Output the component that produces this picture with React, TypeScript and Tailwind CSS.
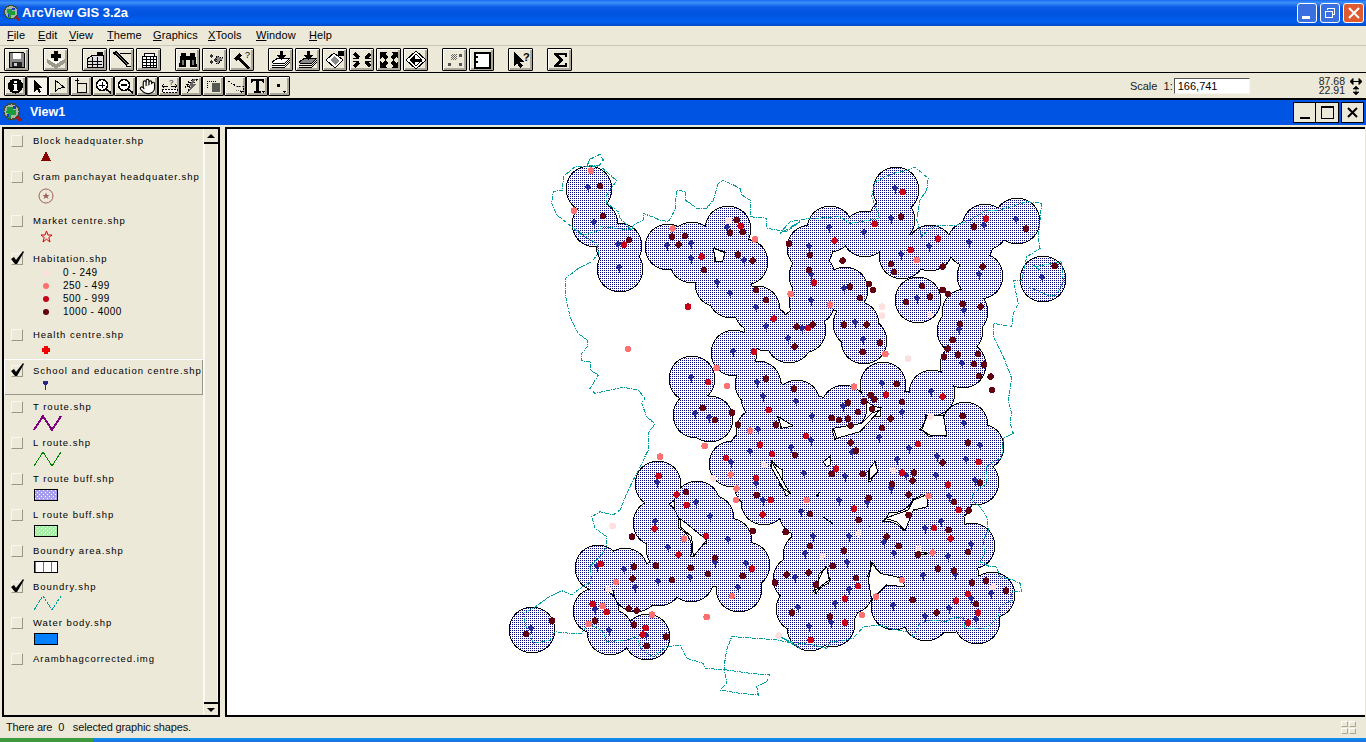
import { Hand } from "lucide-react";
import type { ReactNode } from "react";

type Pt = [number, number];

// crop coords are 3x zoom of the picture, with a crop origin
const crop = (ox: number, oy: number, pts: Pt[]): Pt[] => pts.map(([x, y]) => [ox + x / 3, oy + y / 3]);
const line = (pts: Pt[]) => pts.map(([x, y]) => `${x.toFixed(1)},${y.toFixed(1)}`).join(" ");
const dedupe = (pts: Pt[]) => pts.filter((p, i) => !pts.slice(0, i).some((q) => Math.abs(p[0] - q[0]) < 4 && Math.abs(p[1] - q[1]) < 4));

const PINS: Pt[] = [
  [588, 188], [594, 223], [618, 245], [619, 268], [667, 246], [691, 244], [691, 259], [727, 228], [744, 261], [717, 283],
  [730, 294], [756, 308], [766, 327], [788, 339], [733, 352], [691, 378], [757, 383], [763, 397], [895, 189], [891, 219],
  [864, 233], [829, 228], [809, 247], [811, 275], [844, 289], [811, 301], [855, 323], [802, 329], [863, 340], [901, 255],
  [929, 247], [969, 243], [984, 226], [1016, 220], [979, 275], [917, 299], [1042, 278], [964, 311], [959, 330], [962, 364],
  [882, 384], [931, 392], [695, 414], [709, 418], [758, 430], [796, 402], [750, 452], [791, 448], [731, 463], [756, 484],
  [763, 501], [657, 483], [696, 503], [710, 517], [655, 522], [728, 540], [668, 548], [715, 563], [746, 564], [597, 567],
  [624, 570], [635, 588], [658, 582], [690, 578], [738, 588], [795, 578], [798, 608], [595, 610], [531, 629], [609, 631],
  [646, 636], [843, 407], [902, 413], [812, 417], [811, 441], [879, 438], [909, 449], [852, 453], [897, 460], [937, 457],
  [964, 424], [980, 446], [966, 460], [804, 474], [845, 477], [906, 476], [936, 476], [975, 481], [891, 489], [839, 501],
  [867, 503], [801, 512], [949, 497], [941, 522], [925, 529], [813, 537], [849, 537], [884, 543], [971, 545], [805, 554],
  [894, 554], [948, 557], [847, 563], [955, 575], [923, 576], [991, 594], [971, 599], [849, 590], [835, 604], [893, 606],
  [949, 609], [925, 617], [976, 620], [831, 623], [809, 627],
];

const DARK = dedupe([
  ...crop(500, 140, [[300, 138], [309, 228], [387, 300], [516, 290], [555, 288], [536, 314], [612, 390], [710, 240], [690, 278], [728, 276], [714, 344], [758, 362], [768, 450], [798, 480], [867, 311], [890, 560], [884, 620], [798, 716], [882, 746]]),
  ...crop(780, 140, [[90, 345], [87, 390], [188, 362], [363, 230], [333, 372], [342, 396], [488, 380], [210, 440], [267, 432], [279, 450], [240, 474], [426, 438], [450, 470], [378, 486], [488, 450], [504, 462], [548, 492], [602, 500], [608, 380], [582, 260], [738, 266], [824, 378], [540, 552], [518, 600], [503, 626], [492, 650], [534, 644], [594, 642], [582, 672], [612, 674], [597, 708], [632, 710], [636, 750], [192, 554], [260, 554], [300, 608], [248, 636], [50, 560], [98, 554], [44, 620], [350, 732], [272, 765], [283, 778]]),
  ...crop(500, 400, [[608, 24], [645, 60], [696, 38], [714, 74], [828, 74], [885, 165], [558, 276], [770, 285], [758, 393], [857, 396], [396, 410], [468, 497], [402, 500], [398, 536], [516, 540], [572, 504], [624, 522], [645, 474], [728, 528], [860, 524], [825, 548], [876, 638], [386, 626], [410, 632], [285, 662], [402, 674], [498, 710], [440, 738], [156, 662], [78, 702]]),
  ...crop(780, 400, [[204, 8], [252, 4], [282, 2], [366, 6], [276, 27], [234, 36], [155, 54], [177, 60], [204, 56], [332, 56], [212, 77], [306, 84], [548, 48], [212, 128], [228, 152], [44, 164], [564, 128], [488, 188], [155, 222], [248, 222], [402, 218], [398, 242], [336, 252], [600, 248], [266, 294], [386, 284], [522, 306], [566, 332], [90, 342], [386, 345], [236, 360], [506, 390], [18, 396], [320, 410], [90, 438], [356, 438], [192, 452], [564, 456], [414, 464], [158, 498], [474, 506], [522, 512], [20, 524], [86, 518], [228, 534], [108, 554], [576, 548], [618, 542], [678, 572], [398, 600], [588, 612], [36, 638], [470, 638], [150, 650]]),
]);

const RED = dedupe([
  ...crop(500, 140, [[372, 314], [722, 258], [605, 350], [821, 536], [564, 500], [762, 635], [624, 726]]),
  ...crop(780, 140, [[368, 156], [284, 252], [164, 302], [474, 296], [392, 330], [102, 428], [618, 236], [84, 564], [318, 764], [488, 770]]),
  ...crop(500, 400, [[806, 30], [780, 134], [816, 162], [678, 174], [768, 234], [812, 300], [788, 344], [476, 228], [530, 284], [560, 315], [618, 408], [464, 386], [536, 464], [302, 492], [756, 506], [278, 612], [320, 636], [437, 684], [428, 704]]),
  ...crop(780, 400, [[78, 108], [414, 132], [596, 186], [168, 206], [366, 218], [504, 254], [222, 326], [536, 330], [462, 384], [512, 416], [234, 558], [564, 582], [528, 602], [195, 596], [594, 638], [195, 668], [564, 668], [92, 720]]),
]);

const SALMON = dedupe([
  ...crop(500, 140, [[273, 92], [222, 212], [518, 266], [765, 298], [872, 462], [650, 684], [681, 738], [384, 627]]),
  ...crop(780, 140, [[410, 360], [150, 494], [316, 642], [222, 740]]),
  ...crop(500, 400, [[750, 92], [614, 138], [480, 170], [692, 224], [710, 266], [708, 300], [552, 416], [348, 546], [696, 588], [620, 651], [308, 618], [456, 644], [266, 672]]),
  ...crop(780, 400, [[80, 300], [446, 288], [458, 458], [366, 540], [288, 590], [246, 645]]),
]);

const PALE = dedupe([
  ...crop(500, 140, [[685, 242]]),
  ...crop(780, 140, [[306, 500], [306, 527], [384, 656], [450, 525]]),
  ...crop(500, 400, [[640, 235], [792, 195], [338, 378], [836, 707], [325, 568]]),
  ...crop(780, 400, [[452, 50], [340, 210], [236, 400], [126, 468], [415, 445], [640, 560]]),
]);

const HOLES: Pt[][] = [
  crop(780, 400, [[160, 85], [245, 70], [275, 40], [300, 30], [240, 95], [170, 115]]),
  crop(780, 400, [[425, 90], [440, 50], [490, 45], [500, 105], [450, 105]]),
  crop(780, 400, [[130, 185], [150, 170], [150, 195], [140, 200]]),
  crop(780, 400, [[268, 240], [270, 205], [285, 185], [293, 215]]),
  crop(780, 400, [[315, 355], [385, 330], [400, 300], [440, 285], [443, 320], [400, 330], [375, 392], [350, 365]]),
  crop(780, 400, [[130, 352], [160, 372], [150, 365]]),
  crop(780, 400, [[415, 455], [445, 460], [415, 465]]),
  crop(780, 400, [[265, 540], [275, 490], [300, 520], [370, 535], [373, 560], [320, 555], [290, 585], [275, 600]]),
  crop(780, 400, [[100, 575], [130, 510], [140, 500], [148, 540]]),
  crop(780, 400, [[0, 55], [40, 78], [0, 85]]),
  crop(500, 140, [[640, 325], [675, 338], [668, 365], [648, 365]]),
  crop(500, 400, [[835, 50], [880, 78], [845, 85]]),
  crop(500, 400, [[815, 185], [870, 280], [850, 265], [815, 205]]),
  crop(500, 400, [[540, 355], [620, 420], [580, 470], [575, 410], [540, 380]]),
];

const BOUNDARY: Pt[] = [
  ...crop(500, 140, [[262, 75], [270, 58], [300, 43], [310, 60], [295, 80], [225, 80], [190, 110], [188, 150], [160, 155], [155, 190], [170, 225], [215, 260], [245, 285], [290, 310], [295, 340], [275, 365], [235, 385], [197, 415], [195, 460], [210, 530], [235, 580], [262, 600], [262, 620], [245, 640], [245, 662], [270, 665], [270, 690], [295, 705], [270, 745], [285, 760], [330, 750], [370, 742], [415, 750], [435, 775]]),
  ...crop(500, 400, [[425, 10], [440, 50], [465, 72], [445, 100], [445, 150], [420, 200], [385, 270], [360, 330], [340, 345], [300, 335], [275, 350], [285, 385], [320, 410], [320, 440], [300, 470], [270, 500], [275, 545], [240, 565], [215, 585], [185, 572], [140, 595], [100, 625], [70, 640], [75, 670], [100, 730], [150, 720], [165, 695], [210, 700], [245, 700], [265, 670], [310, 695], [320, 725], [380, 720], [410, 710], [425, 750], [460, 770], [500, 740], [540, 735], [560, 775], [610, 790], [615, 805], [680, 810], [750, 820], [810, 825], [800, 845], [770, 860], [775, 885], [720, 880], [660, 870], [680, 850], [672, 800], [680, 750], [695, 710], [770, 715], [830, 720], [880, 730], [900, 745]]),
  ...crop(780, 400, [[0, 710], [30, 725], [60, 730], [100, 735], [140, 745], [150, 725], [190, 722], [220, 715], [250, 680], [300, 675], [340, 688], [380, 695], [400, 710], [420, 670], [450, 660], [500, 665], [510, 655], [550, 652], [555, 685], [620, 685], [655, 650], [660, 620], [695, 600], [695, 575], [725, 575], [720, 550], [700, 540], [660, 530], [650, 500], [630, 500], [600, 485], [615, 455], [610, 420], [625, 390], [620, 350], [600, 320], [575, 300], [580, 280], [620, 250], [620, 200], [640, 185], [665, 175], [670, 115], [700, 100], [690, 70], [695, 40], [685, 5]]),
  ...crop(780, 140, [[685, 780], [695, 715], [670, 650], [640, 590], [640, 550], [695, 560], [700, 520], [715, 490], [700, 420], [725, 420], [740, 350], [780, 325], [775, 290], [785, 190], [740, 185], [660, 210], [620, 210], [570, 240], [530, 255], [480, 255], [450, 265], [425, 290], [410, 240], [420, 180], [440, 150], [445, 115], [405, 82], [380, 92], [340, 100], [285, 125], [275, 170], [300, 235], [210, 250], [180, 230], [110, 235], [90, 235], [30, 245], [0, 280]]),
  ...crop(500, 140, [[900, 245], [860, 275], [800, 265], [800, 235], [750, 230], [750, 180], [725, 165], [720, 145], [670, 120], [655, 130], [640, 180], [620, 205], [590, 205], [570, 190], [555, 180], [555, 155], [530, 150], [525, 210], [505, 245], [480, 240], [430, 220], [430, 240], [400, 255], [395, 270], [360, 235], [355, 215], [320, 190], [320, 165], [350, 122], [300, 78], [262, 75]]),
];

const BOUNDARY_BITS: Pt[][] = [
  crop(500, 140, [[395, 270], [300, 260], [300, 270], [250, 285], [230, 270]]),
  crop(780, 140, [[760, 375], [780, 390], [765, 380], [845, 365], [850, 425], [830, 465], [800, 465], [745, 440]]),
];

function GisMap() {
  return (
    <svg width="1138" height="586" viewBox="227 129 1138 586" className="block" shapeRendering="crispEdges">
      <defs>
        <pattern id="buff" width="2" height="2" patternUnits="userSpaceOnUse">
          <rect width="2" height="2" fill="#fff" />
          <rect width="1" height="1" fill="#000080" />
        </pattern>
      </defs>
      {PINS.map(([x, y], i) => <circle key={i} cx={x + 1} cy={y + 1} r={23.5} fill="#000" />)}
      {PINS.map(([x, y], i) => <circle key={i} cx={x + 1} cy={y + 1} r={22.5} fill="url(#buff)" />)}
      {HOLES.map((h, i) => <polygon key={i} points={line(h)} fill="#fff" stroke="#000" strokeWidth="1" />)}
      <polyline points={line(BOUNDARY)} fill="none" stroke="#009c9c" strokeWidth="1" strokeDasharray="4 1 1 1" />
      {BOUNDARY_BITS.map((b, i) => <polyline key={i} points={line(b)} fill="none" stroke="#009c9c" strokeWidth="1" strokeDasharray="4 1 1 1" />)}
      {PINS.map(([x, y], i) => (
        <g key={i} fill="#27278f">
          <circle cx={x} cy={y - 1} r={2.6} />
          <rect x={x - 0.5} y={y} width={1} height={5} />
        </g>
      ))}
      {PALE.map(([x, y], i) => <circle key={i} cx={x} cy={y} r={3.3} fill="#ffe0e0" />)}
      {SALMON.map(([x, y], i) => <circle key={i} cx={x} cy={y} r={3.3} fill="#ff7070" />)}
      {RED.map(([x, y], i) => <circle key={i} cx={x} cy={y} r={3.3} fill="#c80018" />)}
      {DARK.map(([x, y], i) => <circle key={i} cx={x} cy={y} r={3.3} fill="#600010" />)}
    </svg>
  );
}

function AppIcon({ size }: { size: number }) {
  return (
    <svg width={size} height={size} viewBox="0 0 20 20" shapeRendering="crispEdges">
      <circle cx="9" cy="9" r="7.5" fill="#a8b4a8" stroke="#3c4a40" strokeWidth="1.5" />
      <path d="M5 5h5v3h3v4H9v3H6V10H4z" fill="#1c9c38" />
      <path d="M10 4h3v3h-3zM5 11h2v3H5z" fill="#1838c8" />
      <path d="M14 14l4 4" stroke="#a01818" strokeWidth="3" />
    </svg>
  );
}

function Tool({ wide, pressed, children }: { wide?: boolean; pressed?: boolean; children: ReactNode }) {
  return (
    <div
      className={
        (wide ? "w-[25px] h-[23px] " : "w-[22px] h-[20px] ") +
        "flex items-center justify-center border border-black rounded-[1px] text-black " +
        (pressed
          ? "bg-[#f6f4ec] shadow-[inset_1px_1px_0_#8a8878]"
          : "bg-[#ece9d8] shadow-[inset_1px_1px_0_#fff,inset_-2px_-2px_0_#aca899]")
      }
    >
      {children}
    </div>
  );
}

const T1 = ({ children }: { children: ReactNode }) => (
  <svg width="20" height="18" viewBox="0 0 20 18" shapeRendering="crispEdges">{children}</svg>
);
const T2 = ({ children }: { children: ReactNode }) => (
  <svg width="17" height="16" viewBox="0 0 17 16" shapeRendering="crispEdges">{children}</svg>
);

const row1: ReactNode[][] = [
  [
    <T1><path d="M2.5 1.5h14l1 1v14h-15z" fill="#8a8a8a" stroke="#000" /><rect x="6" y="2" width="8" height="6" fill="#fff" /><rect x="5" y="11" width="10" height="5" fill="#222" /><rect x="7" y="12" width="3" height="3" fill="#ccc" /></T1>,
  ],
  [
    <T1><path d="M1 8l9 5 9-5v4l-9 6-9-6z" fill="#9a9a8c" /><path d="M3 7l7 4 7-4v2l-7 4-7-4z" fill="#fff" /><path d="M8 0h4v3h3v4h-3v3H8V7H5V3h3z" fill="#000" /></T1>,
  ],
  [
    <T1><path d="M2 8l6-4h10v12H2z" fill="#ddd" stroke="#000" /><path d="M3 10h14M3 13h14M7 6v10M12 6v10" stroke="#000" /><rect x="12" y="1" width="6" height="4" fill="#000" /></T1>,
    <T1><path d="M3 1l13 13" stroke="#000" strokeWidth="3" /><path d="M4 2l12 12" stroke="#888" /><path d="M8 2h11" stroke="#000" /><path d="M14 15h5" stroke="#000" /><path d="M1 1l3 1-2 2z" fill="#000" /></T1>,
    <T1><rect x="3" y="5" width="14" height="11" fill="#fff" stroke="#000" /><path d="M3 8h14M3 11h14M3 14h14M7 5v11M11 5v11M14 5v11" stroke="#000" /><path d="M5 2h10v3H5z" fill="#fff" stroke="#000" /></T1>,
  ],
  [
    <T1><path d="M3 2h5v3h4V2h5l2 14h-7V9H8v7H1z" fill="#000" /><path d="M4 9h2v5H4zM14 9h2v5h-2z" fill="#777" /></T1>,
    <T1><path d="M6 3l2 2-2 2-2-2zM10 7l2 2-2 2-2-2zM6 9l2 2-2 2-2-2z" fill="#333" /><path d="M11 5l7 2-6 7z" fill="#888" stroke="#000" strokeDasharray="1 1" /></T1>,
    <T1><path d="M2 7l5-5 3 2-2 3 10 9-2 2L6 9l-2 1z" fill="#000" /><text x="13" y="7" fontSize="9" fontFamily="Liberation Sans" fill="#000">?</text></T1>,
  ],
  [
    <T1><path d="M1 11l6-4h12l-5 5H2zM1 14h13l5-5M1 16h13l5-5" fill="#fff" stroke="#000" /><path d="M9 0h3v4h3l-4.5 5L6 4h3z" fill="#000" /></T1>,
    <T1><path d="M1 11l6-4h12l-5 5H2z" fill="#888" stroke="#000" /><path d="M1 14h13l5-5M1 16h13l5-5" fill="none" stroke="#000" /><path d="M9 0h3v4h3l-4.5 5L6 4h3z" fill="#000" /></T1>,
    <T1><path d="M9 2l9 7-8 8-9-8z" fill="#fff" stroke="#000" /><path d="M5 9l4-4 5 5-4 4z" fill="#888" /><rect x="13" y="0" width="6" height="5" fill="#000" /></T1>,
    <T1><path d="M3 1l5 5h-1v2H1V7h3L1 4zM17 1l-5 5h1v2h6V7h-3l3-3zM3 17l5-5H7v-2H1v1h3l-3 3zM17 17l-5-5h1v-2h6v1h-3l3 3z" fill="#000" /></T1>,
    <T1><path d="M1 1h7L6 3l3 3-3 3-3-3-2 2zM19 1h-7l2 2-3 3 3 3 3-3 2 2zM1 17h7l-2-2 3-3-3-3-3 3-2-2zM19 17h-7l2-2-3-3 3-3 3 3 2-2z" fill="#000" /></T1>,
    <T1><path d="M10 0l10 9-10 9L0 9z" fill="#fff" stroke="#000" /><path d="M10 3l6 6-6 6-6-6z" fill="#fff" stroke="#000" /><path d="M4 9l5-4v3h7v3H9v3z" fill="#000" /></T1>,
  ],
  [
    <T1><path d="M6 4h6M6 6h6M6 8h6M7 3v6M9 3v6M11 3v6" stroke="#666" strokeDasharray="1 1" /><path d="M14 3h3v3h-3zM3 12h3v3H3zM14 12h3v3h-3z" fill="#555" /></T1>,
    <T1><rect x="2.5" y="1.5" width="15" height="15" fill="#fff" stroke="#000" strokeWidth="2" /><path d="M4 5h2v2H4zM4 10h2v2H4z" fill="#000" /></T1>,
  ],
  [
    <T1><path d="M3 1v14l3-3 3 5 3-2-3-4h4z" fill="#000" /><text x="12" y="10" fontSize="11" fontWeight="700" fontFamily="Liberation Sans" fill="#000">?</text></T1>,
  ],
  [
    <T1><path d="M4 2h13v4h-2V4H9l4 5-4 5h6v-2h2v4H4v-2l5-5-5-5z" fill="#000" /></T1>,
  ],
];

const row2: ReactNode[] = [
  <T2><circle cx="8.5" cy="8" r="7.5" fill="#000" /><rect x="7" y="3" width="3" height="2" fill="#fff" /><path d="M6 6h4v6h1v1H6v-1h1V7H6z" fill="#fff" /></T2>,
  <T2><path d="M5 2v12l3-3 2 4 2-1-2-4h4z" fill="#000" /></T2>,
  <T2><path d="M4.5 2.500v11l3-3 6-1z" fill="#ece9d8" stroke="#000" /></T2>,
  <T2><rect x="4.5" y="5.5" width="9" height="9" fill="none" stroke="#000" /><path d="M2 2h4v1H2zM4 0h1v5H4z" fill="#000" /></T2>,
  <T2><circle cx="7" cy="7" r="5.5" fill="#fff" stroke="#000" strokeWidth="1.5" /><path d="M4 6.500h6v1H4zM6.500 4h1v6h-1z" fill="#000" /><path d="M11 11l5 4" stroke="#000" strokeWidth="2" /></T2>,
  <T2><circle cx="7" cy="7" r="5.5" fill="#fff" stroke="#000" strokeWidth="1.5" /><path d="M4 6h6v2H4z" fill="#000" /><path d="M11 11l5 4" stroke="#000" strokeWidth="2" /></T2>,
  <Hand size={17} strokeWidth={1.6} fill="#fff" color="#000" />,
  <T2><text x="8" y="7" fontSize="8" fontFamily="Liberation Sans" fill="#000">?</text><path d="M1 8h6M1 8l2-2M1 8l2 2M10 8h6M16 8l-2-2M16 8l-2 2" stroke="#000" fill="none" /><path d="M1 11h15v3H1z" fill="#fff" stroke="#000" strokeDasharray="2 1" /></T2>,
  <T2><path d="M10 1h5l-5 5h3l-9 9 3-7H4zM6 3l-4 7" stroke="#000" fill="none" strokeDasharray="2 1" /><path d="M10 1h3l-3 5h3l-8 8 3-6H6z" fill="#666" /></T2>,
  <T2><path d="M7 5h8v9H7z" fill="#333" opacity="0.8" /><path d="M2 3h9M2 3v8" stroke="#000" strokeDasharray="1 1" /></T2>,
  <T2><path d="M1 3l8 5h7v6" fill="none" stroke="#000" strokeDasharray="2 1" /><path d="M9 8h7M9 12h5" stroke="#777" strokeDasharray="1 1" /><path d="M13 13h3l-1.500 2z" fill="#000" /></T2>,
  <T2><path d="M2 1h13v4h-1l-1-2H10v10h2v2H5v-2h2V3H4L3 5H2z" fill="#000" /><path d="M13 13h3l-1.500 2z" fill="#000" /></T2>,
  <T2><rect x="6" y="6" width="3" height="3" fill="#000" /><path d="M12 13h3l-1.500 2z" fill="#000" /></T2>,
];

const MENU = [
  ["F", "ile", "w-[31px]"],
  ["E", "dit", "w-[31px]"],
  ["V", "iew", "w-[38px]"],
  ["T", "heme", "w-[46px]"],
  ["G", "raphics", "w-[55px]"],
  ["X", "Tools", "w-[48px]"],
  ["W", "indow", "w-[53px]"],
  ["H", "elp", "w-[40px]"],
];

function Checkbox({ checked }: { checked?: boolean }) {
  return (
    <div className="relative ml-[7px] w-[12px] h-[12px] border border-[#f8f6ee] border-r-[#9a9888] border-b-[#9a9888] shrink-0">
      {checked && (
        <svg className="absolute -left-[1px] -top-[3px] overflow-visible" width="15" height="15" viewBox="0 0 15 15">
          <path d="M0 8l3-2 2 3 7-9 1 1-7 12H4z" fill="#000" />
        </svg>
      )}
    </div>
  );
}

function Entry({ name, checked, selected, box, children }: { name: string; checked?: boolean; selected?: boolean; box: string; children?: ReactNode }) {
  return (
    <div className={box + " pt-[6px] " + (selected ? "shadow-[inset_1px_1px_0_#fff,inset_-1px_-1px_0_#9a9888]" : "")}>
      <div className="flex items-center h-[12px]">
        <Checkbox checked={checked} />
        <span className="ml-[10px] whitespace-pre text-[9.5px] tracking-[0.98px] text-black">{name}</span>
      </div>
      {children}
    </div>
  );
}

function ClassRow({ color, label }: { color: string; label: string }) {
  return (
    <div className="flex items-center h-[13px] pl-[39px]">
      <div className={"w-[6px] h-[6px] rounded-full " + color} />
      <span className="ml-[14px] text-[10px] tracking-[0.5px] text-black">{label}</span>
    </div>
  );
}

const Zigzag = ({ color, width, dash }: { color: string; width: number; dash?: string }) => (
  <svg width="30" height="16" viewBox="0 0 30 16" className="ml-[29px] mt-[2px]" shapeRendering="crispEdges">
    <path d="M1 15L10 1l9 14 9-14" fill="none" stroke={color} strokeWidth={width} strokeDasharray={dash} />
  </svg>
);

function Swatch({ fill, dots, id }: { fill: string; dots?: boolean; id: string }) {
  return (
    <svg width="24" height="12" className="block ml-[30px] mt-[4px]" shapeRendering="crispEdges">
      <defs>
        <pattern id={id} width="4" height="4" patternUnits="userSpaceOnUse">
          <rect x="1" y="1" width="1" height="1" fill="#fff" />
          <rect x="3" y="3" width="1" height="1" fill="#fff" />
        </pattern>
      </defs>
      <rect x="0.5" y="0.5" width="23" height="11" fill={fill} stroke="#000" />
      {dots && <rect x="1" y="1" width="22" height="10" fill={`url(#${id})`} />}
    </svg>
  );
}

function Legend() {
  return (
    <div className="flex w-[218px] border-2 border-black bg-[#ece9d8]">
      <div className="flex-1 min-w-0 font-['Liberation_Sans',sans-serif]">
        <Entry name="Block headquater.shp" box="h-[36px]">
          <svg width="12" height="12" viewBox="0 0 12 12" className="ml-[36px] mt-[3px]" shapeRendering="crispEdges"><path d="M6 1l5 10H1z" fill="#8b0000" /></svg>
        </Entry>
        <Entry name="Gram panchayat headquater.shp" box="h-[44px]">
          <svg width="16" height="16" viewBox="0 0 16 16" className="ml-[34px] mt-[5px]"><circle cx="8" cy="8" r="7" fill="none" stroke="#a06060" /><path d="M8 4.500l1 2.500h2.500l-2 1.500 1 2.500L8 9.500 5.500 11l1-2.500-2-1.500H7z" fill="#a06060" /></svg>
        </Entry>
        <Entry name="Market centre.shp" box="h-[38px]">
          <svg width="13" height="13" viewBox="0 0 13 13" className="ml-[36px] mt-[3px]"><path d="M6.500 1l1.500 4h4l-3.200 2.500L10 12 6.500 9.200 3 12l1.200-4.500L1 5h4z" fill="none" stroke="#e00000" /></svg>
        </Entry>
        <Entry name="Habitation.shp" checked box="h-[76px]">
          <div className="mt-[1px]">
            <ClassRow color="bg-[#ffe0e0]" label="0 - 249" />
            <ClassRow color="bg-[#ff7070]" label="250 - 499" />
            <ClassRow color="bg-[#c80018]" label="500 - 999" />
            <ClassRow color="bg-[#600010]" label="1000 - 4000" />
          </div>
        </Entry>
        <Entry name="Health centre.shp" box="h-[36px]">
          <svg width="10" height="10" viewBox="0 0 10 10" className="ml-[37px] mt-[4px]" shapeRendering="crispEdges"><path d="M3 1h4v2h2v4H7v2H3V7H1V3h2z" fill="#f00000" /></svg>
        </Entry>
        <Entry name="School and education centre.shp" checked selected box="h-[36px]">
          <svg width="7" height="11" viewBox="0 0 7 11" className="ml-[38px] mt-[3px]" shapeRendering="crispEdges"><path d="M1 1h5v3L4 5v5H3V5L1 4z" fill="#27278f" /></svg>
        </Entry>
        <Entry name="T route.shp" box="h-[36px]"><Zigzag color="#800080" width={2} /></Entry>
        <Entry name="L route.shp" box="h-[36px]"><Zigzag color="#008000" width={1} /></Entry>
        <Entry name="T route buff.shp" box="h-[36px]"><Swatch id="tbuff" fill="#a8a0ee" dots /></Entry>
        <Entry name="L route buff.shp" box="h-[36px]"><Swatch id="lbuff" fill="#a8f0a8" dots /></Entry>
        <Entry name="Boundry area.shp" box="h-[36px]">
          <svg width="24" height="12" className="block ml-[30px] mt-[4px]" shapeRendering="crispEdges">
            <rect x="0.5" y="0.5" width="23" height="11" fill="#fff" stroke="#000" />
            <path d="M1.500 1v10M9.500 1v10M17.500 1v10" stroke="#00c000" />
          </svg>
        </Entry>
        <Entry name="Boundry.shp" checked box="h-[36px]"><Zigzag color="#009c9c" width={1} dash="3 1" /></Entry>
        <Entry name="Water body.shp" box="h-[36px]"><Swatch id="water" fill="#0080ff" /></Entry>
        <Entry name="Arambhagcorrected.img" box="h-[36px]" />
      </div>
      <div className="w-[15px] shrink-0 flex flex-col border-l border-[#fbfaf4]">
        <div className="h-[15px] flex items-center justify-center border-b-2 border-black">
          <div className="w-0 h-0 border-x-[4px] border-x-transparent border-b-[4px] border-b-black" />
        </div>
        <div className="flex-1 border-l border-r border-[#fbfaf4] bg-[#ece9d8]" />
        <div className="h-[13px] flex items-center justify-center border-t-2 border-black">
          <div className="w-0 h-0 border-x-[4px] border-x-transparent border-t-[4px] border-t-black" />
        </div>
      </div>
    </div>
  );
}

export default function App() {
  return (
    <div className="w-[1366px] h-[742px] flex flex-col overflow-hidden bg-[#ece9d8] font-['Liberation_Sans',sans-serif]">
      {/* XP title bar */}
      <div className="h-[26px] flex items-center pl-[3px] pr-[2px] bg-[linear-gradient(180deg,#1a6cf0_0%,#3b8ff8_10%,#0a5ae6_28%,#0054e0_55%,#0060ee_85%,#0048c8_100%)]">
        <AppIcon size={18} />
        <span className="ml-[1px] text-[13px] font-bold text-white">ArcView GIS 3.2a</span>
        <div className="ml-auto flex gap-[3px]">
          <div className="w-[20px] h-[20px] rounded-[3px] border border-white bg-[#3a6fe0] flex items-end pl-[4px] pb-[3px]">
            <div className="w-[8px] h-[3px] bg-white" />
          </div>
          <div className="w-[20px] h-[20px] rounded-[3px] border border-white bg-[#3a6fe0] flex items-center justify-center">
            <svg width="12" height="12" viewBox="0 0 12 12" shapeRendering="crispEdges"><path d="M3.500 3V1.500h7v6H8M1.500 4.500h6.500v6H1.500z" fill="none" stroke="#fff" /></svg>
          </div>
          <div className="w-[21px] h-[20px] rounded-[3px] border border-white bg-[#e05a30] flex items-center justify-center">
            <svg width="12" height="12" viewBox="0 0 12 12"><path d="M1 1l10 10M11 1L1 11" stroke="#fff" strokeWidth="2" /></svg>
          </div>
        </div>
      </div>

      {/* menu */}
      <div className="h-[20px] flex items-center pl-[7px] border-b border-[#c8c6b8] text-[11px] tracking-[0.1px] text-black">
        {MENU.map(([u, rest, w]) => (
          <span key={u + rest} className={w}><span className="underline">{u}</span>{rest}</span>
        ))}
      </div>

      {/* main toolbar */}
      <div className="h-[27px] flex items-center pl-[4px] pt-[1px] gap-[14px] border-b border-black">
        {row1.map((group, i) => (
          <div key={i} className="flex gap-[2px]">
            {group.map((icon, j) => <Tool key={j} wide>{icon}</Tool>)}
          </div>
        ))}
      </div>

      {/* tool row */}
      <div className="h-[27px] flex items-center pl-[4px] pt-[1px] border-b-2 border-black">
        {row2.map((icon, i) => <Tool key={i} pressed={i === 1}>{icon}</Tool>)}
        <div className="ml-auto flex items-center text-[11px] text-[#222]">
          <span className="mr-[1px] whitespace-pre">Scale  1:</span>
          <div className="w-[76px] h-[16px] bg-white border border-t-[#555] border-l-[#555] border-r-[#f8f6ee] border-b-[#f8f6ee] pl-[3px] leading-[14px] text-black">166,741</div>
        </div>
        <div className="ml-[69px] mr-[4px] flex flex-col text-[10.5px] leading-[9px] text-[#222]">
          <div className="flex items-center gap-[5px]"><span>87.68</span><svg width="12" height="9" viewBox="0 0 12 9"><path d="M2 4.500h8M0 4.500l3-3v6zM12 4.500l-3-3v6z" stroke="#000" fill="#000" strokeWidth="1" /></svg></div>
          <div className="flex items-center gap-[5px]"><span>22.91</span><svg width="12" height="9" viewBox="0 0 12 9"><path d="M6 2v5M6 0l-3 3h6zM6 9l-3-3h6z" stroke="#000" fill="#000" strokeWidth="0.6" /></svg></div>
        </div>
      </div>

      {/* view window */}
      <div className="h-[25px] flex items-center pl-[2px] pr-[2px] bg-[#0054e3]">
        <AppIcon size={21} />
        <span className="ml-[7px] text-[12.5px] font-bold text-white">View1</span>
        <div className="ml-auto flex">
          <div className="w-[23px] h-[21px] border border-black bg-[#ece9d8] flex items-end justify-center pb-[3px]"><div className="w-[10px] h-[2px] bg-black" /></div>
          <div className="w-[23px] h-[21px] border border-black border-l-0 bg-[#ece9d8] flex items-center justify-center"><div className="w-[13px] h-[13px] border border-black border-t-2" /></div>
          <div className="ml-[2px] w-[23px] h-[21px] border border-black bg-[#ece9d8] flex items-center justify-center">
            <svg width="11" height="11" viewBox="0 0 11 11"><path d="M1 1l9 9M10 1l-9 9" stroke="#000" strokeWidth="2" /></svg>
          </div>
        </div>
      </div>

      <div className="flex-1 min-h-0 flex pt-[2px] pl-[2px]">
        <Legend />
        <div className="flex-1 ml-[5px] mr-[1px] border-l-2 border-t-2 border-b-2 border-black bg-white min-w-0">
          <GisMap />
        </div>
      </div>

      {/* status */}
      <div className="h-[21px] flex items-center pl-[6px] pr-[10px] text-[11px] tracking-[-0.15px] text-[#111]">
        <span className="whitespace-pre">There are  0   selected graphic shapes.</span>
        <div className="ml-auto grid grid-cols-2 gap-[1px]">
          <div className="w-[7px] h-[6px] border border-white border-r-[#aca899] border-b-[#aca899]" />
          <div className="w-[7px] h-[6px] border border-white border-r-[#aca899] border-b-[#aca899]" />
          <div className="w-[7px] h-[6px] border border-white border-r-[#aca899] border-b-[#aca899]" />
          <div className="w-[7px] h-[6px] border border-white border-r-[#aca899] border-b-[#aca899]" />
        </div>
      </div>

      {/* taskbar edge */}
      <div className="h-[4px] flex shrink-0">
        <div className="w-[93px] bg-[#3f9a3f]" />
        <div className="flex-1 bg-[linear-gradient(180deg,#0a90f0,#1f6fe0)]" />
      </div>
    </div>
  );
}
